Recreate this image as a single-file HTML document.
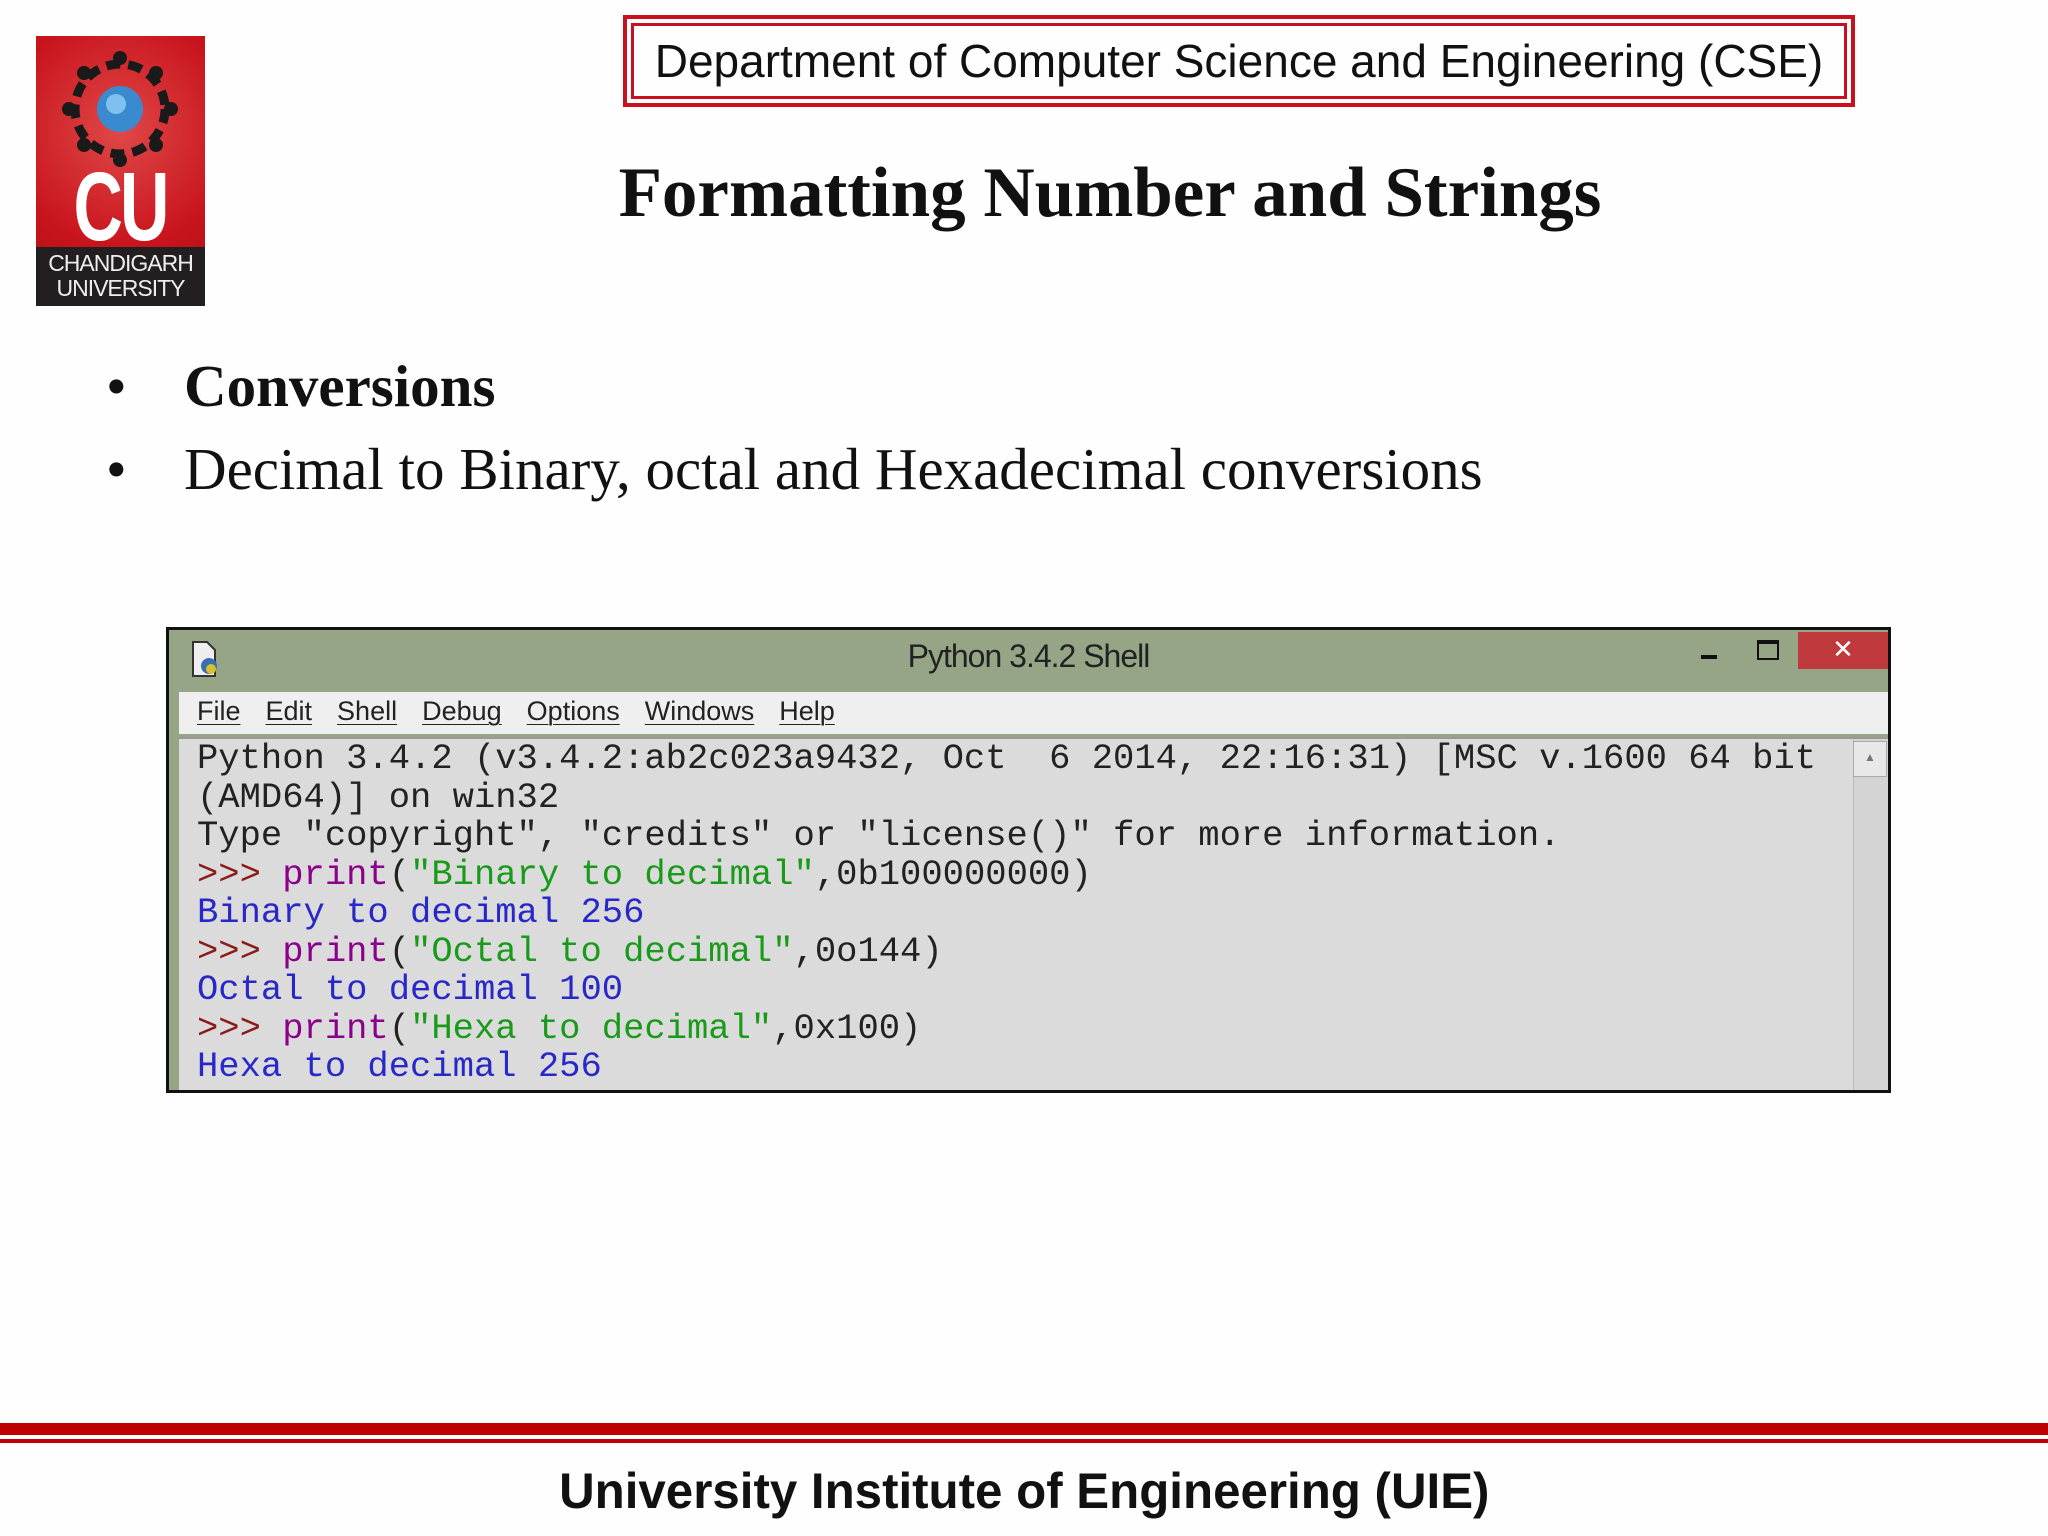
<!DOCTYPE html>
<html><head><meta charset="utf-8"><style>
body{margin:0;width:2048px;height:1536px;background:#fefefe;position:relative;overflow:hidden;font-family:"Liberation Sans",sans-serif}
.abs{position:absolute}
.hdr{left:623px;top:15px;width:1224px;height:84px;border:4px solid #c8101e;}
.hdr .in{position:absolute;left:4px;top:4px;right:4px;bottom:4px;border:3px solid #c8101e;display:flex;align-items:center;justify-content:center;font-size:46px;color:#111;white-space:nowrap}
.title{left:0;width:2220px;top:153px;text-align:center;font-family:"Liberation Serif",serif;font-weight:bold;font-size:71px;color:#111}
.b{font-family:"Liberation Serif",serif;font-size:59px;color:#111;white-space:nowrap}
.win{left:166px;top:627px;width:1719px;height:460px;border:3px solid #111;background:#95a585}
.menu{position:absolute;left:10px;top:62px;right:0;height:42px;background:#efefef;font-size:27px;color:#222}
.menu span{margin-right:25px;text-decoration:underline;text-decoration-thickness:1px;text-underline-offset:4px}
.ta{position:absolute;left:10px;top:107px;right:0;bottom:0;background:#dcdbdb;border-top:2px solid #999}
.code{position:absolute;left:18px;top:1px;font-family:"Liberation Mono",monospace;font-size:35.5px;line-height:38.5px;color:#222;white-space:pre}
.p{color:#8b1a1a}.k{color:#8b008b}.s{color:#1a9a1a}.o{color:#2828c8}
</style></head><body>
<div class="abs" style="left:36px;top:36px;width:169px;height:270px;background:radial-gradient(circle at 50% 35%,#e04848,#c8141c 60%,#a50f15);"></div>
<svg class="abs" style="left:36px;top:36px" width="169" height="215" viewBox="0 0 169 215">
<g fill="none" stroke="#1a1a1a" stroke-width="9">
<circle cx="84" cy="73" r="45" stroke-dasharray="14 8"/>
</g>
<g fill="#1a1a1a">
<circle cx="84" cy="22" r="7"/><circle cx="84" cy="124" r="7"/><circle cx="33" cy="73" r="7"/><circle cx="135" cy="73" r="7"/>
<circle cx="48" cy="37" r="7"/><circle cx="120" cy="37" r="7"/><circle cx="48" cy="109" r="7"/><circle cx="120" cy="109" r="7"/>
</g>
<circle cx="84" cy="73" r="23" fill="#3a8ad0"/>
<circle cx="80" cy="68" r="10" fill="#7fc0ee"/>
<text x="0" y="0" text-anchor="middle" font-family="Liberation Sans" font-weight="bold" font-size="72" fill="#fff" letter-spacing="-3" transform="translate(84,204) scale(0.95,1.35)">CU</text>
</svg>
<div class="abs" style="left:36px;top:247px;width:169px;height:59px;background:#231f20;color:#eee;font-size:23px;line-height:25px;text-align:center;font-family:'Liberation Sans Narrow','Liberation Sans',sans-serif;padding-top:4px;box-sizing:border-box;letter-spacing:-1px">CHANDIGARH<br>UNIVERSITY</div>

<div class="abs hdr"><div class="in">Department of Computer Science and Engineering (CSE)</div></div>
<div class="abs title">Formatting Number and Strings</div>

<div class="abs b" style="left:106px;top:352px">•</div>
<div class="abs b" style="left:184px;top:352px;font-weight:bold">Conversions</div>
<div class="abs b" style="left:106px;top:435px">•</div>
<div class="abs b" style="left:184px;top:435px">Decimal to Binary, octal and Hexadecimal conversions</div>

<div class="abs win">
 <svg class="abs" style="left:20px;top:10px" width="34" height="40" viewBox="0 0 34 40"><path d="M4 2h14l8 8v26H4z" fill="#eee" stroke="#333" stroke-width="2"/><circle cx="20" cy="26" r="8" fill="#3a6fb0"/><circle cx="22" cy="29" r="5" fill="#d8c030"/></svg>
 <div class="abs" style="left:0;right:0;top:8px;text-align:center;font-size:32px;color:#222;letter-spacing:-1px">Python 3.4.2 Shell</div>
 <div class="abs" style="left:1532px;top:25px;width:16px;height:4px;background:#111"></div>
 <div class="abs" style="left:1588px;top:10px;width:18px;height:14px;border:2px solid #111;border-top-width:4px"></div>
 <div class="abs" style="left:1629px;top:2px;width:90px;height:37px;background:#c0393c;color:#fff;text-align:center;font-size:26px;line-height:34px">✕</div>
 <div class="menu"><div style="padding:4px 0 0 18px"><span>File</span><span>Edit</span><span>Shell</span><span>Debug</span><span>Options</span><span>Windows</span><span>Help</span></div></div>
 <div class="ta">
  <div class="code">Python 3.4.2 (v3.4.2:ab2c023a9432, Oct  6 2014, 22:16:31) [MSC v.1600 64 bit
(AMD64)] on win32
Type "copyright", "credits" or "license()" for more information.
<span class="p">&gt;&gt;&gt; </span><span class="k">print</span>(<span class="s">"Binary to decimal"</span>,0b100000000)
<span class="o">Binary to decimal 256</span>
<span class="p">&gt;&gt;&gt; </span><span class="k">print</span>(<span class="s">"Octal to decimal"</span>,0o144)
<span class="o">Octal to decimal 100</span>
<span class="p">&gt;&gt;&gt; </span><span class="k">print</span>(<span class="s">"Hexa to decimal"</span>,0x100)
<span class="o">Hexa to decimal 256</span></div>
  <div class="abs" style="right:0;top:0;width:34px;bottom:0;background:#d4d4d4;border-left:1px solid #bbb"></div>
  <div class="abs" style="right:1px;top:2px;width:32px;height:34px;background:#e8e8e8;border:1px solid #aaa;font-size:12px;color:#777;text-align:center;line-height:30px">▲</div>
 </div>
</div>

<div class="abs" style="left:0;top:1423px;width:2048px;height:12px;background:#c00000"></div>
<div class="abs" style="left:0;top:1439px;width:2048px;height:4px;background:#c00000"></div>
<div class="abs" style="left:0;width:2048px;top:1462px;text-align:center;font-weight:bold;font-size:50px;color:#111"><span style="display:inline-block;transform:scaleX(0.985)">University Institute of Engineering (UIE)</span></div>
</body></html>
